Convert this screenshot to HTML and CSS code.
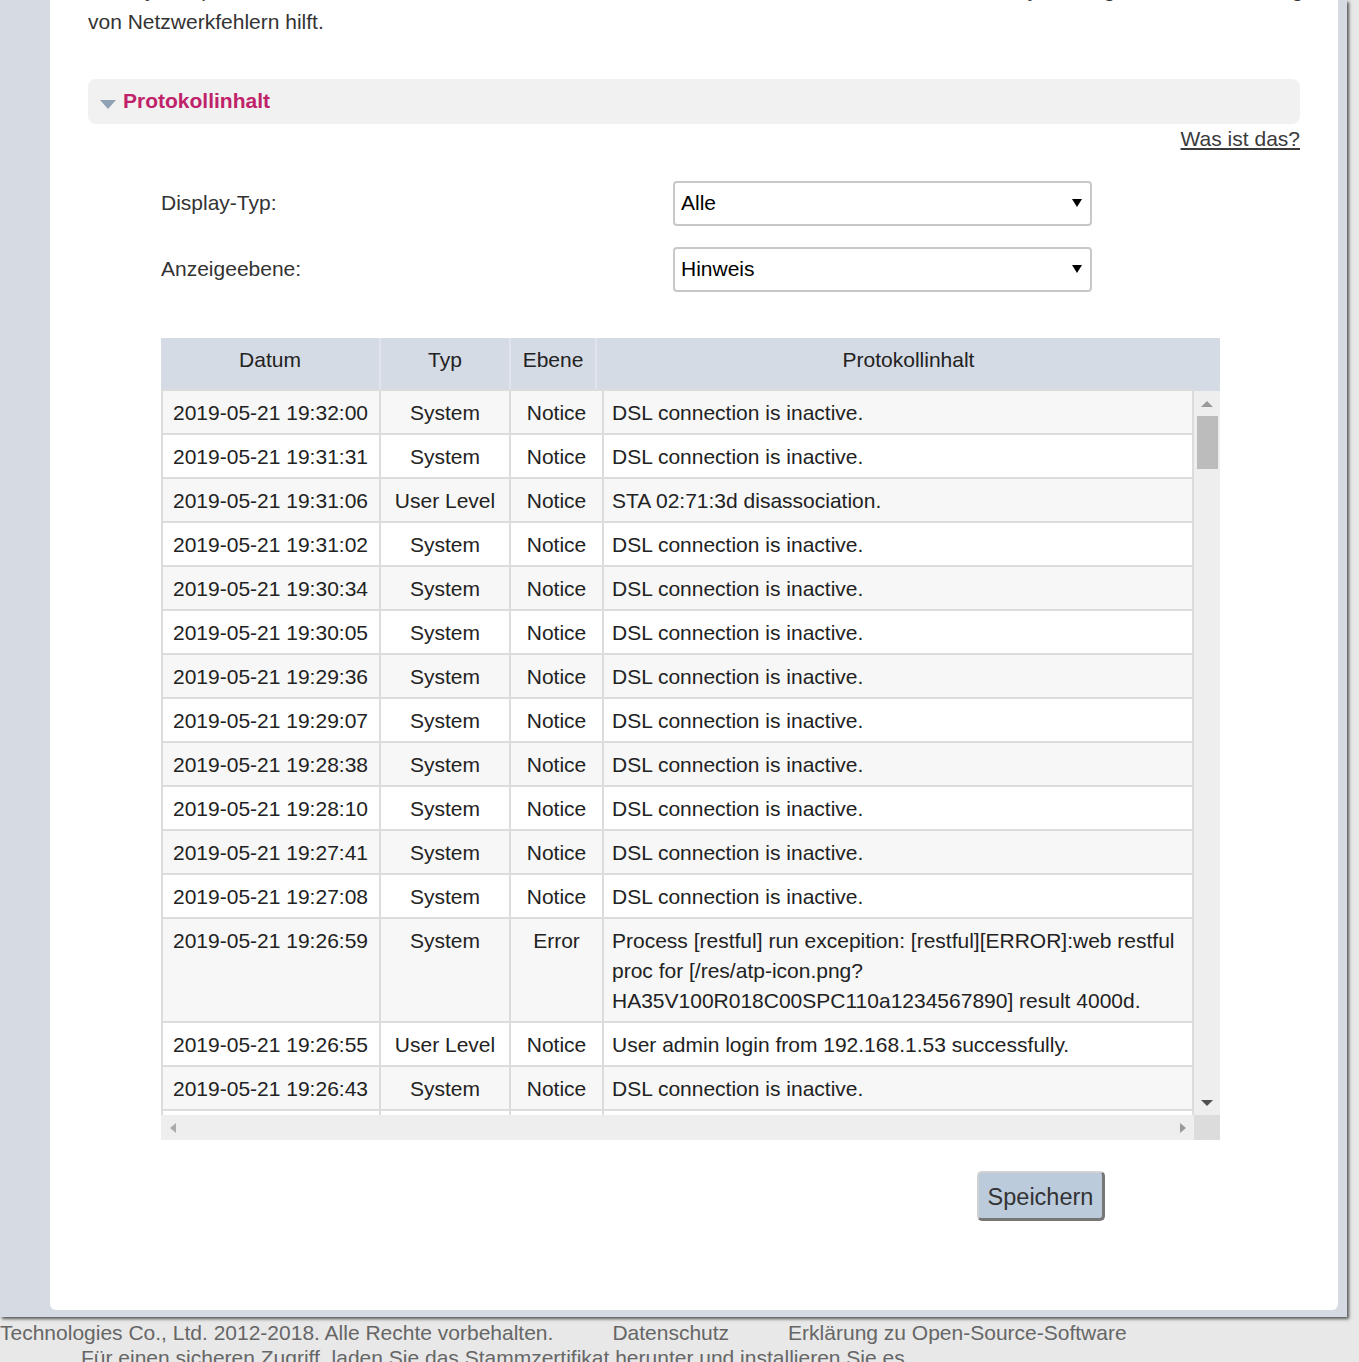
FILE: index.html
```html
<!DOCTYPE html>
<html lang="de">
<head>
<meta charset="utf-8">
<title>Systemprotokoll</title>
<link rel="stylesheet" href="styles.css">
</head>
<body>
<div class="page">
  <div class="panel">
    <p class="intro">Das Systemprotokoll zeichnet Informationen über den Betrieb des Geräts auf, was Ihnen bei der Analyse, Diagnose und Behebung<br>von Netzwerkfehlern hilft.</p>

    <div class="section-head">
      <span class="caret"></span>
      <span class="section-title">Protokollinhalt</span>
    </div>
    <div class="help"><a href="#" class="help-link">Was ist das?</a></div>

    <div class="form">
      <label class="form-label">Display-Typ:</label>
      <div class="select"><span class="select-value">Alle</span><span class="select-arrow"></span></div>
      <label class="form-label">Anzeigeebene:</label>
      <div class="select"><span class="select-value">Hinweis</span><span class="select-arrow"></span></div>
    </div>

    <div class="log">
      <div class="log-head">
        <div class="head-cell">Datum</div>
        <div class="head-cell">Typ</div>
        <div class="head-cell">Ebene</div>
        <div class="head-cell head-last">Protokollinhalt</div>
      </div>
      <div class="log-body">
        <div class="log-viewport">
          <div class="log-row"><div class="cell c-date">2019-05-21 19:32:00</div><div class="cell c-mid">System</div><div class="cell c-mid">Notice</div><div class="cell c-msg">DSL connection is inactive.</div></div>
          <div class="log-row"><div class="cell c-date">2019-05-21 19:31:31</div><div class="cell c-mid">System</div><div class="cell c-mid">Notice</div><div class="cell c-msg">DSL connection is inactive.</div></div>
          <div class="log-row"><div class="cell c-date">2019-05-21 19:31:06</div><div class="cell c-mid">User Level</div><div class="cell c-mid">Notice</div><div class="cell c-msg">STA 02:71:3d disassociation.</div></div>
          <div class="log-row"><div class="cell c-date">2019-05-21 19:31:02</div><div class="cell c-mid">System</div><div class="cell c-mid">Notice</div><div class="cell c-msg">DSL connection is inactive.</div></div>
          <div class="log-row"><div class="cell c-date">2019-05-21 19:30:34</div><div class="cell c-mid">System</div><div class="cell c-mid">Notice</div><div class="cell c-msg">DSL connection is inactive.</div></div>
          <div class="log-row"><div class="cell c-date">2019-05-21 19:30:05</div><div class="cell c-mid">System</div><div class="cell c-mid">Notice</div><div class="cell c-msg">DSL connection is inactive.</div></div>
          <div class="log-row"><div class="cell c-date">2019-05-21 19:29:36</div><div class="cell c-mid">System</div><div class="cell c-mid">Notice</div><div class="cell c-msg">DSL connection is inactive.</div></div>
          <div class="log-row"><div class="cell c-date">2019-05-21 19:29:07</div><div class="cell c-mid">System</div><div class="cell c-mid">Notice</div><div class="cell c-msg">DSL connection is inactive.</div></div>
          <div class="log-row"><div class="cell c-date">2019-05-21 19:28:38</div><div class="cell c-mid">System</div><div class="cell c-mid">Notice</div><div class="cell c-msg">DSL connection is inactive.</div></div>
          <div class="log-row"><div class="cell c-date">2019-05-21 19:28:10</div><div class="cell c-mid">System</div><div class="cell c-mid">Notice</div><div class="cell c-msg">DSL connection is inactive.</div></div>
          <div class="log-row"><div class="cell c-date">2019-05-21 19:27:41</div><div class="cell c-mid">System</div><div class="cell c-mid">Notice</div><div class="cell c-msg">DSL connection is inactive.</div></div>
          <div class="log-row"><div class="cell c-date">2019-05-21 19:27:08</div><div class="cell c-mid">System</div><div class="cell c-mid">Notice</div><div class="cell c-msg">DSL connection is inactive.</div></div>
          <div class="log-row"><div class="cell c-date">2019-05-21 19:26:59</div><div class="cell c-mid">System</div><div class="cell c-mid">Error</div><div class="cell c-msg">Process [restful] run excepition: [restful][ERROR]:web restful proc for [/res/atp-icon.png?<wbr>HA35V100R018C00SPC110a1234567890] result 4000d.</div></div>
          <div class="log-row"><div class="cell c-date">2019-05-21 19:26:55</div><div class="cell c-mid">User Level</div><div class="cell c-mid">Notice</div><div class="cell c-msg">User admin login from 192.168.1.53 successfully.</div></div>
          <div class="log-row"><div class="cell c-date">2019-05-21 19:26:43</div><div class="cell c-mid">System</div><div class="cell c-mid">Notice</div><div class="cell c-msg">DSL connection is inactive.</div></div>
          <div class="log-row"><div class="cell c-date">2019-05-21 19:26:14</div><div class="cell c-mid">System</div><div class="cell c-mid">Notice</div><div class="cell c-msg">DSL connection is inactive.</div></div>
          <div class="log-row"><div class="cell c-date">2019-05-21 19:25:45</div><div class="cell c-mid">System</div><div class="cell c-mid">Notice</div><div class="cell c-msg">DSL connection is inactive.</div></div>
        </div>
        <div class="vbar">
          <span class="arrow-up"></span>
          <span class="thumb"></span>
          <span class="arrow-down"></span>
        </div>
        <div class="hbar">
          <span class="arrow-left"></span>
          <span class="arrow-right"></span>
        </div>
        <div class="corner"></div>
      </div>
    </div>

    <div class="actions"><button class="btn" type="button">Speichern</button></div>
  </div>
</div>
<footer class="footer">
  <div class="footer-row">
    <span>Technologies Co., Ltd. 2012-2018. Alle Rechte vorbehalten.</span>
    <a href="#" class="footer-link">Datenschutz</a>
    <a href="#" class="footer-link">Erklärung zu Open-Source-Software</a>
  </div>
  <div class="footer-note">Für einen sicheren Zugriff, laden Sie das Stammzertifikat herunter und installieren Sie es.</div>
</footer>
</body>
</html>
```

FILE: styles.css
```css
body {
  margin: 0;
  background: #e8e8e8;
  font-family: "Liberation Sans", Arial, sans-serif;
  font-size: 21px;
  color: #333;
}

.page {
  width: 1347px;
  box-sizing: border-box;
  padding: 0 9px 7px 50px;
  background: #d5dae3;
  box-shadow: 2px 2px 3px #555;
}

.panel {
  display: flow-root;
  background: #fff;
  border-radius: 0 0 6px 6px;
  padding: 0 38px 89px 38px;
}

.intro {
  margin: -26px 0 0;
  font-size: 21px;
  line-height: 32px;
  color: #333;
  white-space: nowrap;
}

.section-head {
  margin-top: 41px;
  height: 45px;
  background: #f1f1f1;
  border-radius: 8px;
  display: flex;
  align-items: center;
  padding-left: 12px;
}

.caret {
  width: 0;
  height: 0;
  border-left: 8px solid transparent;
  border-right: 8px solid transparent;
  border-top: 9px solid #8fa2b3;
  margin-top: 6px;
  margin-right: 7px;
}

.section-title {
  font-weight: bold;
  font-size: 21px;
  line-height: 43px;
  padding-bottom: 2px;
  color: #c0226a;
}

.help {
  margin-top: 3px;
  text-align: right;
  line-height: 24px;
}

.help-link {
  color: #3a3a3a;
  text-decoration: underline;
  text-decoration-thickness: 2px;
  text-underline-offset: 2px;
}

.form {
  margin-top: 30px;
  padding-left: 73px;
  display: grid;
  grid-template-columns: 512px 419px;
  row-gap: 21px;
  align-items: center;
}

.form-label {
  color: #333;
  padding-bottom: 1px;
}

.select {
  height: 45px;
  box-sizing: border-box;
  border: 2px solid #c8c8c8;
  border-radius: 4px;
  display: flex;
  align-items: center;
  justify-content: space-between;
  padding: 0 8px 1px 6px;
  color: #000;
}

.select-arrow {
  width: 0;
  height: 0;
  border-left: 5px solid transparent;
  border-right: 5px solid transparent;
  border-top: 8px solid #000;
}

.log {
  margin: 46px 0 0 73px;
  width: 1059px;
}

.log-head {
  display: grid;
  grid-template-columns: 220px 130px 86px 623px;
  background: #d5dbe4;
}

.head-cell {
  text-align: center;
  line-height: 43px;
  padding-bottom: 8px;
  color: #222;
  border-right: 2px solid #e1e4ea;
}

.head-cell.head-last {
  border-right: none;
}

.log-body {
  display: grid;
  grid-template-columns: 1033px 26px;
  grid-template-rows: 726px 25px;
}

.log-viewport {
  overflow: hidden;
  border-top: 2px solid #dcdcdc;
  border-left: 2px solid #dcdcdc;
}

.log-row {
  display: grid;
  grid-template-columns: 218px 130px 93px 590px;
  background: #fff;
}

.log-row:nth-child(odd) {
  background: #f7f7f7;
}

.cell {
  padding: 7px 8px 5px;
  line-height: 30px;
  color: #222;
  border-right: 2px solid #dcdcdc;
  border-bottom: 2px solid #dcdcdc;
}

.c-date {
  padding-left: 10px;
  white-space: nowrap;
}

.c-mid {
  text-align: center;
  white-space: nowrap;
  padding-left: 4px;
  padding-right: 4px;
}

.c-msg {
  padding-left: 8px;
  padding-right: 10px;
}

.vbar {
  background: #eeeeee;
  border-top: 2px solid #d5dbe4;
  display: flex;
  flex-direction: column;
  align-items: center;
}

.arrow-up {
  margin-top: 10px;
  width: 0;
  height: 0;
  border-left: 6px solid transparent;
  border-right: 6px solid transparent;
  border-bottom: 6px solid #9a9a9a;
}

.thumb {
  margin-top: 9px;
  width: 21px;
  height: 53px;
  background: #bcbcbc;
}

.arrow-down {
  margin-top: auto;
  margin-bottom: 9px;
  width: 0;
  height: 0;
  border-left: 6px solid transparent;
  border-right: 6px solid transparent;
  border-top: 6px solid #505050;
}

.hbar {
  background: #eeeeee;
  display: flex;
  align-items: center;
  justify-content: space-between;
  padding: 0 8px 0 9px;
}

.arrow-left {
  width: 0;
  height: 0;
  border-top: 5px solid transparent;
  border-bottom: 5px solid transparent;
  border-right: 6px solid #aaaaaa;
}

.arrow-right {
  width: 0;
  height: 0;
  border-top: 5px solid transparent;
  border-bottom: 5px solid transparent;
  border-left: 6px solid #9a9a9a;
}

.corner {
  background: #dcdcdc;
}

.actions {
  display: flex;
  justify-content: flex-end;
  margin: 31px 195px 0 0;
}

.btn {
  width: 128px;
  height: 50px;
  box-sizing: border-box;
  padding: 3px 0 0;
  background: #bccbdb;
  border-top: 2px solid #d2d2d2;
  border-left: 2px solid #d2d2d2;
  border-right: 3px solid #777;
  border-bottom: 3px solid #777;
  border-radius: 5px;
  font-family: "Liberation Sans", Arial, sans-serif;
  font-size: 23.5px;
  color: #333;
}

.footer {
  padding-top: 3px;
  line-height: 25px;
  color: #666;
  white-space: nowrap;
}

.footer-row {
  display: flex;
  gap: 59px;
}

.footer-link {
  color: #666;
  text-decoration: none;
}

.footer-note {
  padding-left: 81px;
}
```
